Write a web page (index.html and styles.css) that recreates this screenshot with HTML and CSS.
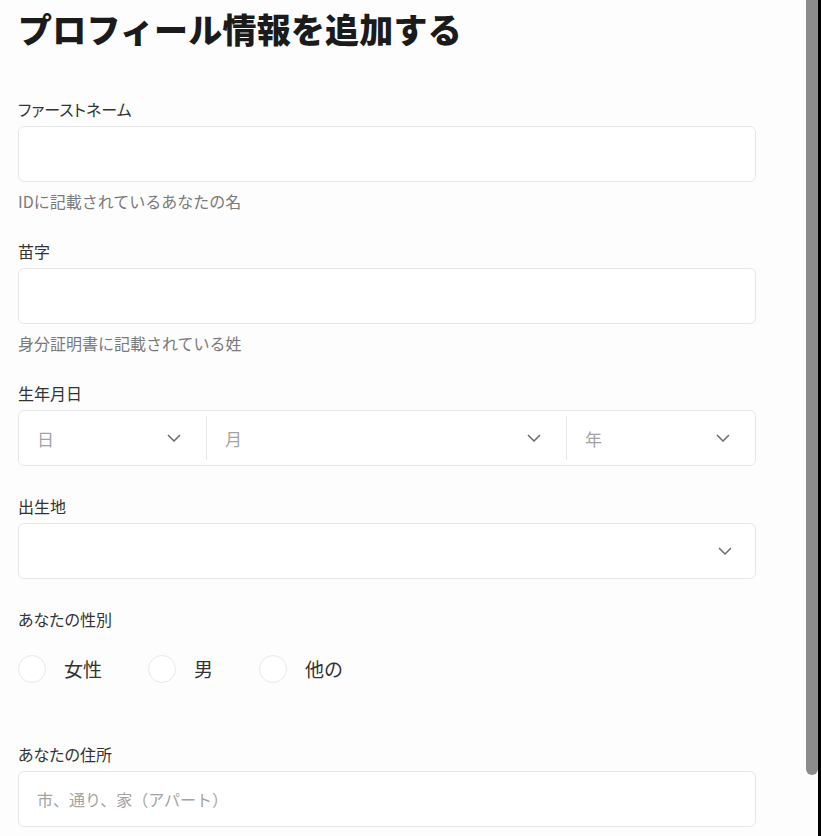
FILE: index.html
```html
<!DOCTYPE html>
<html lang="ja">
<head>
    <meta charset="UTF-8">
    <meta name="viewport" content="width=device-width, initial-scale=1.0">
    <title>プロフィール情報を追加する</title>
    <link rel="stylesheet" href="styles.css">
</head>
<body>
    <div class="page">
        <h1 class="title">プロフィール情報を追加する</h1>

        <div class="field">
            <div class="label">ファーストネーム</div>
            <input class="input" type="text">
            <div class="hint">IDに記載されているあなたの名</div>
        </div>

        <div class="field">
            <div class="label">苗字</div>
            <input class="input" type="text">
            <div class="hint">身分証明書に記載されている姓</div>
        </div>

        <div class="field">
            <div class="label">生年月日</div>
            <div class="date-row">
                <div class="date-cell">
                    <span class="placeholder">日</span>
                    <svg class="chevron" width="14" height="8" viewBox="0 0 14 8"><polyline points="1,1 7,7 13,1"/></svg>
                </div>
                <div class="date-cell">
                    <span class="placeholder">月</span>
                    <svg class="chevron" width="14" height="8" viewBox="0 0 14 8"><polyline points="1,1 7,7 13,1"/></svg>
                </div>
                <div class="date-cell">
                    <span class="placeholder">年</span>
                    <svg class="chevron" width="14" height="8" viewBox="0 0 14 8"><polyline points="1,1 7,7 13,1"/></svg>
                </div>
            </div>
        </div>

        <div class="field">
            <div class="label">出生地</div>
            <div class="select">
                <span class="placeholder"></span>
                <svg class="chevron" width="14" height="8" viewBox="0 0 14 8"><polyline points="1,1 7,7 13,1"/></svg>
            </div>
        </div>

        <div class="field">
            <div class="label">あなたの性別</div>
            <div class="radios">
                <label class="radio"><span class="circle"></span>女性</label>
                <label class="radio"><span class="circle"></span>男</label>
                <label class="radio"><span class="circle"></span>他の</label>
            </div>
        </div>

        <div class="field">
            <div class="label">あなたの住所</div>
            <input class="input" type="text" placeholder="市、通り、家（アパート）">
        </div>
    </div>

    <div class="scrollbar">
        <div class="thumb"></div>
    </div>
</body>
</html>
```

FILE: styles.css
```css
body {
    margin: 0;
    height: 836px;
    overflow: hidden;
    display: flex;
    background-color: #fdfdfd;
    font-family: "Noto Sans CJK JP", "Noto Sans", sans-serif;
    color: #333;
}

.page {
    flex: 1;
    padding: 0 50px 0 18px;
}

.title {
    margin: 9px 0 50px;
    font-size: 34px;
    line-height: 40px;
    font-weight: 900;
    color: #1b1b1b;
    letter-spacing: 0.2px;
}

.field {
    margin-bottom: 30px;
}

.label {
    font-size: 16px;
    line-height: 20px;
    margin-bottom: 7px;
    color: #333;
    font-feature-settings: "palt";
}

.input {
    display: block;
    width: 100%;
    height: 56px;
    box-sizing: border-box;
    border: 1px solid #e6e6e6;
    border-radius: 6px;
    background-color: #fff;
    padding: 0 18px;
    font-family: inherit;
    font-size: 16px;
    color: #333;
    outline: none;
}

.input::placeholder {
    color: #a3a3a3;
}

.hint {
    margin-top: 9px;
    font-size: 16px;
    line-height: 20px;
    color: #7a7a7a;
}

.date-row {
    display: grid;
    grid-template-columns: 187px 1fr 189px;
    height: 56px;
    box-sizing: border-box;
    padding: 5px 0;
    border: 1px solid #e6e6e6;
    border-radius: 6px;
    background-color: #fff;
}

.date-cell {
    display: flex;
    align-items: center;
    justify-content: space-between;
    padding: 0 25px 0 18px;
}

.date-cell + .date-cell {
    border-left: 1px solid #e8e8e8;
}

.placeholder {
    font-size: 17px;
    color: #a3a3a3;
}

.chevron {
    fill: none;
    stroke: #6b6b6b;
    stroke-width: 1.5;
}

.select {
    display: flex;
    align-items: center;
    justify-content: space-between;
    height: 56px;
    box-sizing: border-box;
    padding: 0 23px 0 18px;
    border: 1px solid #e6e6e6;
    border-radius: 6px;
    background-color: #fff;
}

.radios {
    display: flex;
    gap: 46px;
    padding: 19px 0 31px;
}

.radio {
    display: flex;
    align-items: center;
    gap: 18px;
    font-size: 19px;
    line-height: 28px;
    color: #333;
}

.circle {
    width: 28px;
    height: 28px;
    box-sizing: border-box;
    border: 1.5px solid #e8e8e8;
    border-radius: 50%;
    background-color: #fff;
}

.scrollbar {
    width: 12px;
    border-right: 3px solid #000;
    background-color: #fdfdfd;
}

.thumb {
    height: 775px;
    background-color: #8c8c8c;
    border-radius: 0 0 6px 6px;
}
```
